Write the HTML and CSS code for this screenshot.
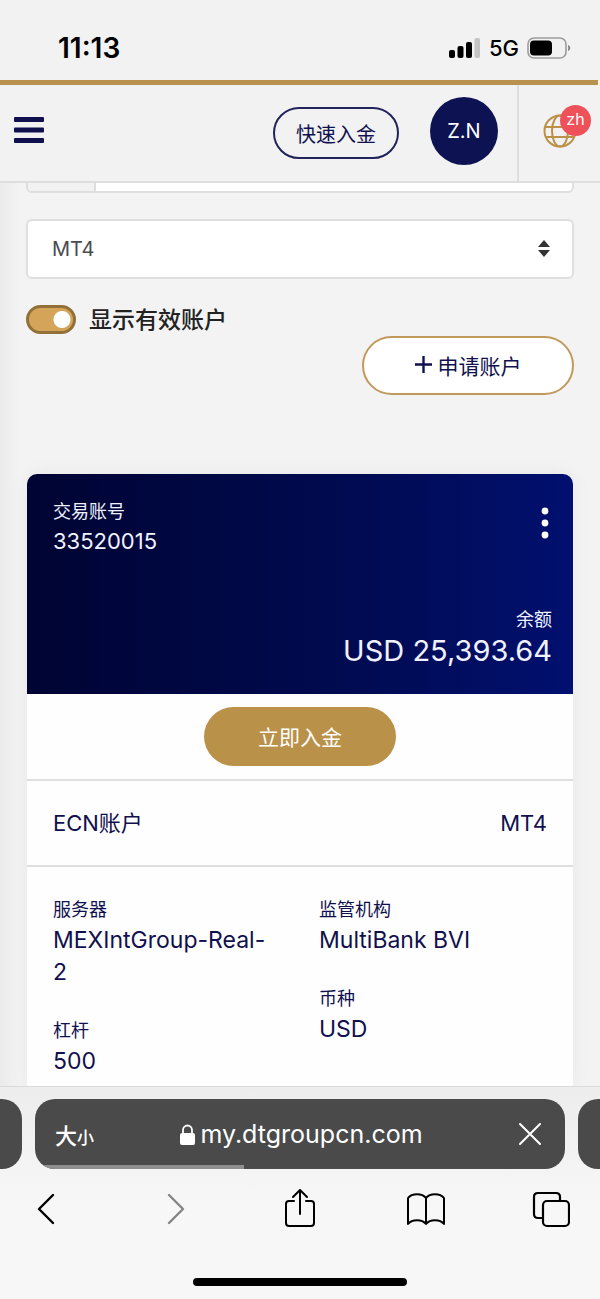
FILE: index.html
```html
<!DOCTYPE html>
<html lang="zh-CN">
<head>
<meta charset="utf-8">
<meta name="viewport" content="width=device-width, initial-scale=1">
<title>my.dtgroupcn.com</title>
<link rel="stylesheet" href="styles.css">
</head>
<body>
<div class="status">
  <span class="status-time">11:13</span>
  <div class="status-right">
    <svg class="signal" width="32" height="20" viewBox="0 0 32 20" aria-hidden="true">
      <rect x="0" y="12" width="6" height="8" rx="2"/><rect x="8.5" y="8" width="6" height="12" rx="2"/><rect x="17" y="4" width="6" height="16" rx="2"/><rect x="25.5" y="0" width="5.5" height="20" rx="2" fill="#c4c4c4"/>
    </svg>
    <span class="status-net">5G</span>
    <svg width="44" height="22" viewBox="0 0 44 22" aria-hidden="true">
      <rect x="1" y="1" width="38" height="20" rx="6" fill="none" stroke="#9b9b9b" stroke-width="1.6"/><rect x="3" y="3.500" width="22" height="15" rx="4"/><path d="M41 8c3 1 3 5 0 6z" fill="#8a8a8a"/>
    </svg>
  </div>
</div>
<div class="accent"></div>
<header class="topbar">
  <button class="menu" type="button" aria-label="菜单">
    <svg width="30" height="26" viewBox="0 0 30 26" fill="#10104f" aria-hidden="true"><rect width="30" height="5" rx="1"/><rect y="10.500" width="30" height="5" rx="1"/><rect y="21" width="30" height="5" rx="1"/></svg>
  </button>
  <button class="quick" type="button">快速入金</button>
  <button class="avatar" type="button">Z.N</button>
  <button class="lang" type="button">
    <svg width="34" height="34" viewBox="0 0 34 34" fill="none" stroke="#bd9048" stroke-width="2" aria-hidden="true"><circle cx="17" cy="17" r="15.500"/><ellipse cx="17" cy="17" rx="8" ry="15.500"/><path d="M2 13h30M2.500 23h29"/></svg>
    <span class="lang-badge">zh</span>
  </button>
</header>
<main class="content">
  <div class="group"><span class="group-prefix"></span></div>
  <div class="select-box">
    <select class="select" aria-label="平台"><option>MT4</option><option>MT5</option></select>
    <svg class="select-arrows" width="12" height="17" viewBox="0 0 12 17" fill="#333" aria-hidden="true"><path d="M6 0l6 7H0zM6 17l6-7H0z"/></svg>
  </div>
  <label class="toggle-row"><input class="toggle" type="checkbox" checked><span class="toggle-text">显示有效账户</span></label>
  <button class="apply" type="button">
    <svg width="17" height="17" viewBox="0 0 17 17" stroke="#10104f" stroke-width="2.400" aria-hidden="true"><path d="M8.500 0v17M0 8.500h17"/></svg>
    <span>申请账户</span>
  </button>
  <section class="card">
    <div class="hero">
      <div class="hero-top">
        <div>
          <div class="label">交易账号</div>
          <div class="account">33520015</div>
        </div>
        <button class="more" type="button" aria-label="更多">
          <svg width="8" height="32" viewBox="0 0 8 32" fill="#fff" aria-hidden="true"><circle cx="4" cy="4" r="3.400"/><circle cx="4" cy="16" r="3.400"/><circle cx="4" cy="28" r="3.400"/></svg>
        </button>
      </div>
      <div class="balance">
        <div class="label">余额</div>
        <div class="amount">USD 25,393.64</div>
      </div>
    </div>
    <div class="action"><button class="deposit" type="button">立即入金</button></div>
    <div class="kind"><span>ECN账户</span><span>MT4</span></div>
    <div class="details">
      <dl class="col">
        <div><dt class="label">服务器</dt><dd class="value">MEXIntGroup-Real-<wbr>2</dd></div>
        <div><dt class="label">杠杆</dt><dd class="value">500</dd></div>
      </dl>
      <dl class="col">
        <div><dt class="label">监管机构</dt><dd class="value">MultiBank BVI</dd></div>
        <div><dt class="label">币种</dt><dd class="value">USD</dd></div>
      </dl>
    </div>
  </section>
</main>
<footer class="browser">
  <div class="tabs">
    <div class="tab-side tab-prev"></div>
    <div class="tab">
      <button class="text-size" type="button" aria-label="文字大小"><span>大</span><span class="small">小</span></button>
      <div class="address">
        <svg width="15" height="21" viewBox="0 0 15 21" aria-hidden="true"><rect y="9" width="15" height="12" rx="2" fill="#fff"/><path d="M3 10V6a4.500 4.500 0 0 1 9 0v4" fill="none" stroke="#fff" stroke-width="1.800"/></svg>
        <span>my.dtgroupcn.com</span>
      </div>
      <button class="stop" type="button" aria-label="停止">
        <svg width="22" height="22" viewBox="0 0 22 22" stroke="#fff" stroke-width="2" stroke-linecap="round" aria-hidden="true"><path d="M1 1l20 20M21 1L1 21"/></svg>
      </button>
      <div class="progress"></div>
    </div>
    <div class="tab-side tab-next"></div>
  </div>
  <nav class="tools">
    <button type="button" aria-label="后退"><svg width="38" height="40" viewBox="0 0 38 40" fill="none" stroke="#000" stroke-width="2.400" stroke-linecap="round" stroke-linejoin="round"><path d="M23 6L9 20l14 14"/></svg></button>
    <button type="button" aria-label="前进"><svg width="38" height="40" viewBox="0 0 38 40" fill="none" stroke="#858585" stroke-width="2.400" stroke-linecap="round" stroke-linejoin="round"><path d="M13 6l14 14-14 14"/></svg></button>
    <button type="button" aria-label="分享"><svg width="38" height="40" viewBox="0 0 38 40" fill="none" stroke="#000" stroke-width="2" stroke-linecap="round" stroke-linejoin="round"><path d="M13 12H8q-3 0-3 3v19q0 3 3 3h22q3 0 3-3V15q0-3-3-3h-5M19 25V1M12 8l7-7 7 7"/></svg></button>
    <button type="button" aria-label="书签"><svg width="38" height="40" viewBox="0 0 38 40" fill="none" stroke="#000" stroke-width="2" stroke-linejoin="round"><path d="M19 9C15 4 5 4 1 9v26c4-5 14-5 18 0 4-5 14-5 18 0V9C33 4 23 4 19 9zM19 9v26"/></svg></button>
    <button type="button" aria-label="标签页"><svg width="38" height="40" viewBox="0 0 38 40" fill="none" stroke="#000" stroke-width="2.200"><rect x="11" y="12" width="26" height="25" rx="4"/><path d="M11 29H6q-4 0-4-4V8q0-4 4-4h18q4 0 4 4v4"/></svg></button>
  </nav>
  <div class="home"></div>
</footer>
</body>
</html>
```
FILE: styles.css
```css
* { box-sizing: border-box; }

body {
  margin: 0;
  min-height: 100vh;
  display: flex;
  flex-direction: column;
  background: #f3f3f3;
  color: #10104f;
  font-family: Inter, "Noto Sans CJK SC", sans-serif;
}

button {
  margin: 0;
  padding: 0;
  border: 0;
  background: none;
  color: inherit;
  font: inherit;
}

svg { display: block; flex: none; }

/* Phone status bar */
.status {
  display: flex;
  align-items: center;
  justify-content: space-between;
  height: 80px;
  padding: 16px 29px 0 58px;
  background: #f2f2f2;
  color: #000;
}
.status-time { font-size: 28px; font-weight: 600; line-height: 32px; }
.status-right { display: flex; align-items: center; gap: 8px; }
.status-net { font-size: 22px; font-weight: 500; line-height: 32px; }

.accent { height: 5px; margin-right: 2px; background: #b99250; }

/* Site header */
.topbar {
  display: flex;
  align-items: center;
  height: 98px;
  padding-left: 14px;
  background: #f2f2f2;
  border-bottom: 2px solid #dedede;
}
.menu { margin-right: auto; padding-bottom: 6px; }
.quick {
  width: 126px;
  height: 52px;
  border: 2px solid #23235c;
  border-radius: 26px;
  font-size: 20px;
}
.avatar {
  width: 68px;
  height: 68px;
  margin: 0 19px 4px 31px;
  border-radius: 50%;
  background: #0d1352;
  color: #fff;
  font-size: 20px;
}
.lang {
  position: relative;
  align-self: stretch;
  width: 83px;
  padding: 0 0 4px 24px;
  border-left: 2px solid #dedede;
}
.lang-badge {
  position: absolute;
  top: 20px;
  right: 9px;
  width: 31px;
  height: 31px;
  border-radius: 50%;
  background: #ee5159;
  color: #fff;
  font-size: 16px;
  line-height: 29px;
  text-align: center;
}

/* Page content */
.content {
  flex: 1;
  display: flex;
  flex-direction: column;
  padding: 0 26px;
  background: linear-gradient(90deg, #ebebeb, #f3f3f3 20px);
}
.group {
  display: flex;
  height: 10px;
  border: 2px solid #dedede;
  border-top: 0;
  border-radius: 0 0 6px 6px;
  background: #fff;
}
.group-prefix {
  width: 68px;
  border-right: 2px solid #dedede;
  border-radius: 0 0 0 4px;
  background: #f2f2f2;
}
.select-box { position: relative; margin-top: 26px; }
.select {
  display: block;
  appearance: none;
  width: 100%;
  height: 60px;
  padding: 0 24px;
  border: 2px solid #dedede;
  border-radius: 6px;
  background: #fff;
  color: #4a4a4f;
  font-family: inherit;
  font-size: 20px;
}
.select-arrows { position: absolute; top: 21px; right: 24px; }

.toggle-row {
  display: flex;
  align-items: center;
  gap: 13px;
  margin-top: 23px;
  color: #222;
  font-size: 23px;
  font-weight: 500;
  line-height: 32px;
}
.toggle-text { padding-top: 2px; }
.toggle {
  appearance: none;
  width: 50px;
  height: 29px;
  margin: 0;
  border: 3px solid #91703a;
  border-radius: 15px;
  background: radial-gradient(circle at 33px 50%, #fff 8px, #d4a458 9px);
}
.apply {
  align-self: flex-end;
  display: flex;
  align-items: center;
  justify-content: center;
  gap: 6px;
  width: 212px;
  height: 59px;
  padding-bottom: 2px;
  border: 2px solid #c09a5c;
  border-radius: 30px;
  background: #fff;
  font-size: 21px;
}

/* Account card */
.card {
  flex: 1;
  display: flex;
  flex-direction: column;
  margin: 79px 1px 0;
  border-radius: 10px 10px 0 0;
  background: #fefefe;
  box-shadow: 0 0 20px #0000000d;
}
.hero {
  display: flex;
  flex-direction: column;
  justify-content: space-between;
  min-height: 220px;
  padding: 24px 21px 26px 26px;
  border-radius: 10px 10px 0 0;
  background: linear-gradient(90deg, #000433, #000a4e 55%, #01106f);
  color: #f0f2ff;
}
.hero-top { display: flex; align-items: flex-start; justify-content: space-between; }
.more { padding: 9px 3px; }
.balance { text-align: right; }
.label { font-size: 18px; line-height: 28px; }
.value { margin: 0; font-size: 23px; line-height: 32px; }
.account { font-size: 22px; line-height: 30px; }
.amount { font-size: 29px; line-height: 34px; }

.action {
  display: flex;
  justify-content: center;
  padding: 13px;
  border-bottom: 2px solid #dfdfdf;
}
.deposit {
  width: 192px;
  height: 59px;
  padding-bottom: 2px;
  border-radius: 30px;
  background: #ba9148;
  color: #fff;
  font-size: 21px;
}
.kind {
  display: flex;
  justify-content: space-between;
  padding: 26px;
  border-bottom: 2px solid #dfdfdf;
  font-size: 22px;
  line-height: 32px;
}
.details {
  display: grid;
  grid-template-columns: 220px 1fr;
  column-gap: 46px;
  padding: 29px 26px 9px;
}
.col { display: flex; flex-direction: column; gap: 29px; margin: 0; }

/* Browser bottom bar */
.browser {
  padding-bottom: 13px;
  border-top: 1px solid #dadada;
  background: linear-gradient(#ededed, #f7f7f7 120px);
  z-index: 1;
}
.tabs {
  display: flex;
  gap: 13px;
  height: 70px;
  margin-top: 12px;
}
.tab-side { width: 22px; background: #4a4a4a; }
.tab-prev { border-radius: 0 20px 20px 0; }
.tab-next { border-radius: 20px 0 0 20px; }
.tab {
  position: relative;
  flex: 1;
  display: flex;
  align-items: center;
  justify-content: space-between;
  padding: 0 24px 0 20px;
  border-radius: 20px;
  overflow: hidden;
  background: #4a4a4a;
  color: #fff;
}
.text-size {
  display: flex;
  align-items: baseline;
  font-size: 22px;
  font-weight: 500;
}
.small { font-size: 17px; }
.address {
  display: flex;
  align-items: center;
  gap: 5px;
  padding-right: 10px;
  font-size: 25px;
  line-height: 32px;
}
.progress {
  position: absolute;
  left: 0;
  bottom: 0;
  width: 39.5%;
  height: 4px;
  background: #8f8f8f;
}
.tools {
  display: flex;
  justify-content: space-between;
  padding: 20px 30px 0;
}
.home {
  width: 214px;
  height: 8px;
  margin: 49px auto 0;
  border-radius: 4px;
  background: #000;
}
```
